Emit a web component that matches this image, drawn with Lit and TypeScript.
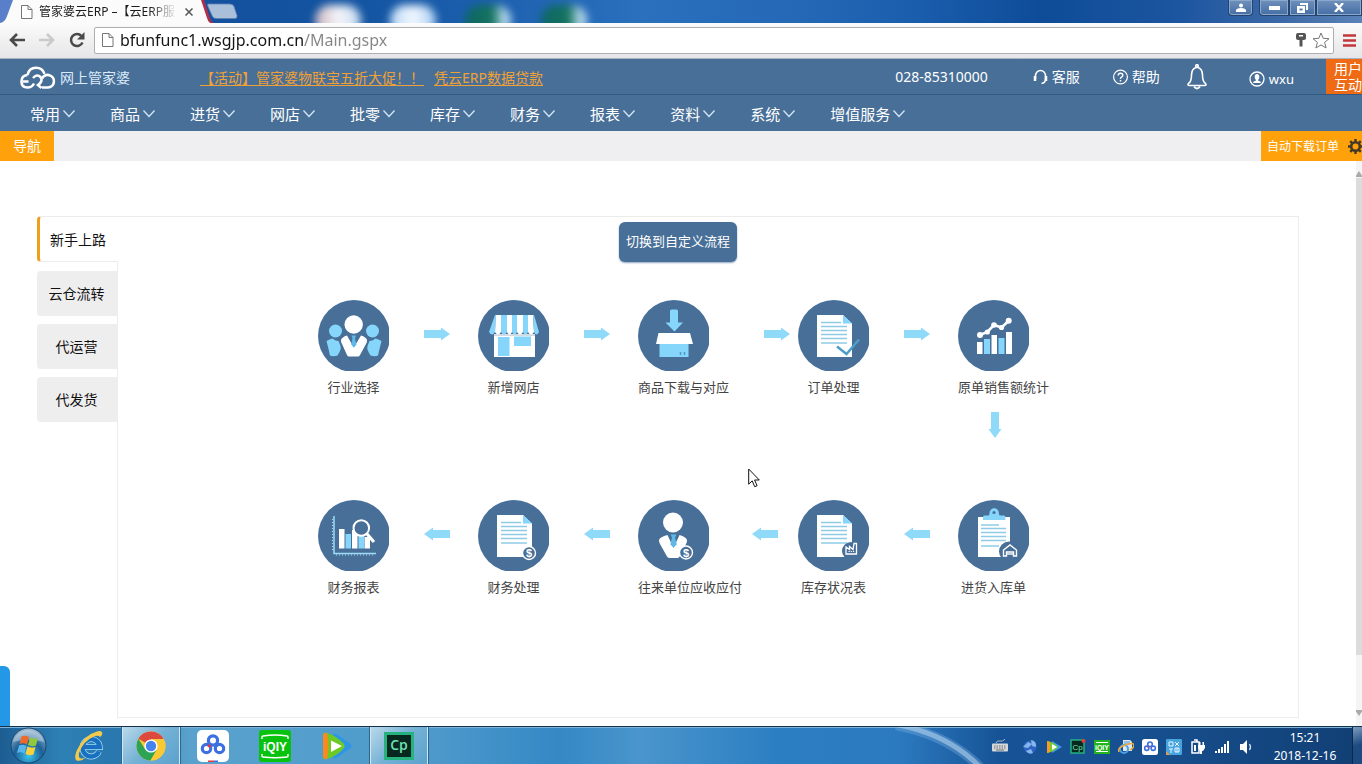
import { LitElement, html, css, svg, SVGTemplateResult } from "lit";
import { customElement, state } from "lit/decorators.js";
import { classMap } from "lit/directives/class-map.js";

const BLUE = "#486f98";
const SKY = "#86d6fb";

/* ---------- shared icon fragments ---------- */

const sheetLines = svg`
  <path d="M23 22.5h20M23 26.5h26M23 30.5h26M23 34.5h26M23 38.5h26M23 43h26" stroke="#8fcbe6" stroke-width="1.3" fill="none"/>`;

const sheet = svg`
  <path d="M19 15h26l9 8.5V57H19z" fill="#fff"/>
  <path d="M45 15v8.5h9z" fill=${SKY}/>
  ${sheetLines}`;

const coin = (x: number, y: number) => svg`
  <circle cx=${x} cy=${y} r="6.5" fill=${BLUE} stroke="#fff" stroke-width="1.4"/>
  <text x=${x} y=${y + 4} font-size="11" font-weight="700" text-anchor="middle" fill="#fff" font-family="Liberation Sans, sans-serif">$</text>`;

/* awning stripes: top edge and scalloped bottom edge positions */
const awningTop = [17, 18, 23, 29, 34, 39, 45, 50, 55, 56];
const awningBottom = [11, 17, 23, 29, 34, 39, 45, 50, 56, 61];
const awning = awningBottom.slice(0, -1).map((b, i) => {
  const end = awningBottom[i + 1];
  return svg`<path d=${`M${awningTop[i]} 15H${awningTop[i + 1]}L${end} 32Q${(b + end) / 2} 37 ${b} 32z`} fill=${i % 2 ? "#fff" : SKY}/>`;
});

const icons: Record<string, SVGTemplateResult> = {
  people: svg`
    <g fill=${SKY}>
      <circle cx="17.5" cy="31" r="6.5"/><circle cx="54.5" cy="31" r="6.5"/>
      <path d="M8.500 41q3-2 6-2.500l3 2 3 .500 2 5q1 3-1 6l-2 3.500q-5 1.500-7.500 0L10.500 49z"/>
      <path d="M63.500 41q-3-2-6-2.500l-3 2-3 .500-2 5q-1 3 1 6l2 3.500q5 1.500 7.500 0L61.500 49z"/>
    </g>
    <circle cx="35.700" cy="24.500" r="9.200" fill="#fff"/>
    <path d="M23 40q1-3 6-4.500l6.800 12L43 35.500q5 1.500 6 4.500.3 2-1 4l-6 11q-.7 1.500-2 1.500h-9q-1.300 0-2-1.500l-5-11q-1.300-2-1-4z" fill="#fff"/>
    <path d="M33.500 35.500h4.500l-1 3 1.500 6-2.700 3-2.600-3 1.300-6z" fill="#5fb9e8"/>`,
  store: svg`
    <path d="M16 34h41v23H16z" fill="#fff"/>
    <path d="M16 35h41" stroke="#a9b9c6" stroke-width="1"/>
    ${awning}
    <path d="M20 37h11.500v19H20zM36 36.500h17V46H36z" fill=${SKY}/>`,
  box: svg`
    <path d="M32 11q0-1.500 1.500-1.500h5Q40 9.500 40 11v11.500h5L36.500 31.500 27.500 22.500H32z" fill=${SKY}/>
    <path d="M20.500 33h31.500l3 11H18z" fill="#fff"/>
    <path d="M21.500 44h29v13h-29z" fill=${SKY}/>
    <path d="M42.500 52v3M46.500 52v3" stroke="#4d9bc9" stroke-width="1.500"/>`,
  order: svg`${sheet}
    <path d="M39 46.500l9.500 7.500L61 39.500" fill="none" stroke="#4b9fc9" stroke-width="2.500"/>`,
  trend: svg`
    <path d="M19 42h5.500v12H19zM33.500 35H39v19h-5.500zM48 32h6v22h-6z" fill="#fff"/>
    <path d="M26 39h6v15h-6zM40.500 38h6v16h-6z" fill=${SKY}/>
    <path d="M22 35l7.300-3L36 25l7.500 2.500 7-6.500" fill="none" stroke="#fff" stroke-width="2.600"/>
    <g fill="#fff"><circle cx="22" cy="35" r="3"/><circle cx="29.300" cy="32" r="2.600"/><circle cx="36" cy="25" r="2.800"/><circle cx="43.500" cy="27.500" r="2.600"/><circle cx="50.700" cy="20.800" r="3"/></g>`,
  report: svg`
    <path d="M16 16v37.500h42" fill="none" stroke="#9fdcf8" stroke-width="1.500"/>
    <path d="M14.500 19v33M18 55h39" fill="none" stroke="#9fdcf8" stroke-width="1" stroke-dasharray="1 2"/>
    <path d="M21 29h5.500v19.500H21zM34 30h5.500v18.500H34zM46.500 37H52v11.500h-5.500z" fill="#fff"/>
    <path d="M27.500 34H33v14.500h-5.500zM40.500 35h5.500v13.500h-5.500z" fill=${SKY}/>
    <circle cx="43.300" cy="28" r="7.800" fill=${BLUE} stroke="#fff" stroke-width="2"/>
    <path d="M49 34l7 8" stroke="#fff" stroke-width="3.200"/>`,
  finance: svg`${sheet}${coin(51, 53)}`,
  person: svg`
    <circle cx="35" cy="22.500" r="10" fill="#fff"/>
    <path d="M21 40q1-3 8.500-5l6 13 6-13q6.500 2 7.500 5 .3 2-1 4l-6 12q-1 2-2.500 2H32q-2 0-3-1.500L22 44q-1-2-1-4z" fill="#fff"/>
    <path d="M32.500 34.500h6l-1.500 3 1.800 7-3.300 3-3.200-3 1.700-7z" fill="#5fb9e8"/>
    ${coin(48, 52.5)}`,
  stock: svg`${sheet}
    <circle cx="53" cy="51" r="9" fill=${BLUE}/>
    <path d="M48 54V47l3.500 2.500V46.500L55 49.500l1-6h2.500V54z" fill="none" stroke="#fff" stroke-width="1.300"/>
    <path d="M50.500 51.500h6" stroke="#fff" stroke-width="1.200" stroke-dasharray="1.200 1"/>`,
  inbound: svg`
    <path d="M20 17h32v40H20z" fill="#fff"/>
    <path d="M25 20v-3q0-1.500 1.500-1.500h4q1 0 1-2.500a4.700 4.700 0 0 1 9.400 0q0 2.500 1 2.500h4q1.500 0 1.500 1.500v3z" fill=${SKY}/>
    <circle cx="36" cy="12.500" r="1.600" fill=${BLUE}/>
    <path d="M23 25h18M23 28.500h25M23 32.500h25M23 36.500h25M23 40.500h25M23 46h18" stroke="#8fcbe6" stroke-width="1.300" fill="none"/>
    <circle cx="51" cy="51.500" r="10" fill=${BLUE}/>
    <path d="M45.500 56v-6l6.500-5 6.500 5v6h-3v-4h-7v4z" fill="none" stroke="#fff" stroke-width="1.400"/>
    <path d="M49 54h6" stroke="#fff" stroke-width="1.400"/>`,
};

interface Step { icon: string; label: string; arrow?: "right" | "left"; offset?: string; }

const firstRow: Step[] = [
  { icon: "people", label: "行业选择", arrow: "right" },
  { icon: "store", label: "新增网店", arrow: "right" },
  { icon: "box", label: "商品下载与对应", arrow: "right", offset: "far" },
  { icon: "order", label: "订单处理", arrow: "right" },
  { icon: "trend", label: "原单销售额统计" },
];

const secondRow: Step[] = [
  { icon: "report", label: "财务报表", arrow: "left" },
  { icon: "finance", label: "财务处理", arrow: "left" },
  { icon: "person", label: "往来单位应收应付", arrow: "left", offset: "mid" },
  { icon: "stock", label: "库存状况表", arrow: "left" },
  { icon: "inbound", label: "进货入库单" },
];

const font = css`"Noto Sans", "Noto Sans CJK SC", sans-serif`;

const base = css`
  * { box-sizing: border-box; }
  :host { display: block; font-family: ${font}; }
  button { font: inherit; color: inherit; background: none; border: 0; padding: 0; margin: 0; cursor: pointer; }
  a { color: inherit; text-decoration: none; }
  svg { display: block; flex: none; }
`;

/* ---------- browser window chrome ---------- */

@customElement("browser-chrome")
class BrowserChrome extends LitElement {
  static styles = [base, css`
    .strip {
      display: flex; justify-content: space-between; height: 23px; position: relative; overflow: hidden;
      background: linear-gradient(90deg, #3466b4 0, #14519f 220px, #12539f 340px, #1c5fae 480px, #2a70bd 640px, #2468b6 800px, #1a5dac 920px, #0e4c98 1040px, #1c55a0 1180px, #3f6ba8 1290px, #5a83b8 100%);
    }
    .glow { position: absolute; top: 5px; width: 46px; height: 30px; border-radius: 16px; filter: blur(4px); }
    .g1 { left: 315px; background: linear-gradient(90deg, #c9b3bd, #f6f6fa 50%, #c4d8f0); }
    .g2 { left: 390px; background: linear-gradient(90deg, #b8d6f6, #f2f8ff 50%, #a9cdf2); }
    .g3 { left: 465px; background: linear-gradient(90deg, #0d6664 0, #15735f 60%, #b9daf0 85%); }
    .g4 { left: 541px; background: linear-gradient(90deg, #0d6664 0, #15735f 60%, #b9daf0 85%); }
    .tabs { display: flex; position: relative; }
    .tabshape { position: absolute; left: 0; top: 0; }
    .tab { position: relative; display: flex; align-items: center; height: 23px; width: 200px; padding-left: 21px; gap: 6px; }
    .title {
      width: 138px; white-space: nowrap; overflow: hidden; font-size: 12px; line-height: 20px; color: #1c1c1c;
      -webkit-mask-image: linear-gradient(90deg, #000 80%, transparent);
    }
    .close { width: 12px; height: 20px; display: grid; place-items: center; }
    .win { display: flex; position: relative; height: 16px; color: #fff; }
    .wbtn { display: grid; place-items: center; height: 16px; border: 1px solid #24446f; border-top: 0; background: linear-gradient(#6f90ba, #456ea6); box-shadow: inset 0 0 0 1px #8aa7cc; }
    .user { width: 25px; margin-right: 6px; border-radius: 0 0 4px 4px; }
    .min { width: 30px; border-radius: 0 0 0 4px; }
    .max { width: 27px; }
    .x { width: 46px; }
    .bar {
      display: flex; align-items: center; height: 36px; padding: 0 5px 1px 9px; gap: 14px;
      background: linear-gradient(#fbfbfb, #e6e6e8); border-bottom: 1px solid #a9b4c2;
    }
    .tool { width: 16px; height: 20px; display: grid; place-items: center; }
    .address {
      flex: 1; min-width: 0; display: flex; align-items: center; height: 27px; margin: 0 -7px 0 -5px; padding: 0 3px 0 7px; gap: 6px;
      background: #fff; border: 1px solid #adadb2; border-radius: 2px;
    }
    .url {
      flex: 1; min-width: 0; border: 0; outline: 0; padding: 0; height: 24px; font-family: ${font}; font-size: 16px; color: #222;
      background: linear-gradient(90deg, #141414 184px, #858585 184px); -webkit-background-clip: text; background-clip: text;
      -webkit-text-fill-color: transparent;
    }
    .lead { display: flex; align-items: center; gap: 14px; }
  `];

  render() {
    const page = svg`<path d="M.5.5h6.500l4 4v9H.5z M7 .5v4h4" fill="#fff" stroke="#777"/>`;
    return html`
      <div class="strip">
        <i class="glow g1"></i><i class="glow g2"></i><i class="glow g3"></i><i class="glow g4"></i>
        <div class="tabs">
          <svg class="tabshape" width="240" height="23" viewBox="0 0 240 23">
            <path d="M0 23q5-1 7-7L13 0H0z" fill="#5a7fca"/>
            <path d="M208 4h22q3 0 4 2.500l3 9q.5 3-2 3h-19q-3 0-4-3l-4-9q-1-2.500 0-2.500z" fill="#aabfd9" stroke="#5f82b4" stroke-width=".8"/>
            <path d="M200 0h4l6 18q1 4 4 5h-10z" fill="#b0304a"/>
            <path d="M0 23q5-1 7-7l6-16h188l6 18q1 4 3 5z" fill="#fbfbfb"/>
          </svg>
          <div class="tab">
            <svg width="12" height="14" viewBox="0 0 12 14">${page}</svg>
            <span class="title">管家婆云ERP –【云ERP服</span>
            <button class="close" aria-label="关闭标签页">
              <svg width="8" height="8" viewBox="0 0 8 8"><path d="M.5.5l7 7M7.500.5l-7 7" stroke="#555" stroke-width="1.500"/></svg>
            </button>
          </div>
        </div>
        <div class="win">
          <button class="wbtn user" aria-label="用户">
            <svg width="10" height="9" viewBox="0 0 10 9"><circle cx="5" cy="2.500" r="2" fill="#fff"/><path d="M0 9V7q1-2 5-2t5 2v2z" fill="#fff"/></svg>
          </button>
          <button class="wbtn min" aria-label="最小化"><svg width="11" height="4"><path d="M0 0h11v4H0z" fill="#fff"/></svg></button>
          <button class="wbtn max" aria-label="还原">
            <svg width="11" height="10" viewBox="0 0 11 10"><path d="M3 0h8v7H9V2H3zM0 3h8v7H0zM2.500 5.500v2h3v-2z" fill="#fff" fill-rule="evenodd"/></svg>
          </button>
          <button class="wbtn x" aria-label="关闭"><svg width="10" height="9" viewBox="0 0 10 9"><path d="M1 0l8 9M9 0L1 9" stroke="#fff" stroke-width="2.400"/></svg></button>
        </div>
      </div>
      <div class="bar">
        <div class="lead">
          <button class="tool" aria-label="后退"><svg width="16" height="14" viewBox="0 0 16 14"><path d="M8 1L2 7l6 6M2.500 7H16" fill="none" stroke="#4a4a4a" stroke-width="2.600"/></svg></button>
          <button class="tool" aria-label="前进"><svg width="16" height="14" viewBox="0 0 16 14"><path d="M8 1l6 6-6 6M0 7h13.500" fill="none" stroke="#cacaca" stroke-width="2.600"/></svg></button>
          <button class="tool" aria-label="重新加载"><svg width="16" height="16" viewBox="0 0 16 16"><path d="M13.500 10.500A6 6 0 1 1 12.500 4" fill="none" stroke="#4a4a4a" stroke-width="2.500"/><path d="M15.500 0v7.500H8z" fill="#4a4a4a"/></svg></button>
        </div>
        <div class="address">
          <svg width="12" height="14" viewBox="0 0 12 14">${page}</svg>
          <input class="url" aria-label="网址" .value=${"bfunfunc1.wsgjp.com.cn/Main.gspx"} spellcheck="false" />
          <svg width="10" height="14" viewBox="0 0 10 14"><path d="M2 0h6q2 0 2 2v3q0 2-2 2H6.500v6.500h-3V7H2Q0 7 0 5V2q0-2 2-2zM3 2v1.500h4V2z" fill="#555" fill-rule="evenodd"/></svg>
          <svg width="18" height="17" viewBox="0 0 18 17"><path d="M9 1l2.200 5.300 5.800.4-4.400 3.700 1.500 5.600L9 12.900 3.900 16l1.500-5.600L1 6.700l5.800-.4z" fill="#fff" stroke="#777"/></svg>
        </div>
        <button class="tool" aria-label="菜单"><svg width="13" height="13" viewBox="0 0 13 13"><path d="M0 1.500h13M0 6.500h13M0 11.500h13" stroke="#c2373b" stroke-width="2.600"/></svg></button>
      </div>`;
  }
}

/* ---------- ERP header, menu and page tabs ---------- */

@customElement("erp-header")
class ErpHeader extends LitElement {
  static styles = [base, css`
    .top { display: flex; align-items: center; height: 36px; padding-left: 20px; background: #486f98; border-bottom: 1px solid #335980; color: #fff; font-size: 14px; line-height: 20px; overflow: hidden; }
    .brand { display: flex; align-items: center; gap: 4px; width: 180px; padding-top: 2px; color: #dcebfa; }
    .promo { display: flex; gap: 10px; padding-top: 2px; color: #f0a136; white-space: nowrap; }
    .promo a { text-decoration: underline; text-underline-offset: 2px; }
    .side { display: flex; align-items: center; margin-left: auto; height: 100%; white-space: nowrap; }
    .link { display: flex; align-items: center; gap: 4px; }
    .service { margin: 0 33px 0 45px; }
    .bell { margin: 0 41px 0 26px; }
    .account { margin-right: 32px; padding-top: 4px; font-size: 13px; }
    .talk { width: 36px; height: 36px; padding-left: 8px; overflow: hidden; background: #ee6a14; font-size: 14px; line-height: 16px; text-align: left; white-space: normal; word-break: break-all; }
    .menu { display: flex; align-items: center; gap: 34px; height: 36px; padding: 2px 0 0 30px; background: #486f98; color: #fff; font-size: 15px; line-height: 22px; }
    .menu button { display: flex; align-items: center; gap: 2px; white-space: nowrap; }
    .pages { display: flex; justify-content: space-between; height: 30px; background: #efeef0; color: #fff; }
    .nav { width: 54px; background: #ffa10a; font-size: 14px; line-height: 20px; }
    .auto { display: flex; align-items: center; gap: 9px; width: 101px; padding-left: 6px; overflow: hidden; background: #ffa10a; font-size: 12px; white-space: nowrap; }
  `];

  private menus = ["常用", "商品", "进货", "网店", "批零", "库存", "财务", "报表", "资料", "系统", "增值服务"];

  render() {
    return html`
      <header class="top">
        <a class="brand" href="#">
          <svg width="36" height="24" viewBox="0 0 36 24" fill="none" stroke="#fff" stroke-width="2.600">
            <path d="M7.500 9Q1.500 9.500 1.500 15.500 1.500 21.500 7.500 21.500 12 21.500 14 17.500M3 15.500h5.500"/>
            <path d="M7.500 9Q9 1.800 16 1.800q6.500 0 8.500 6"/>
            <path d="M13 12q4-4.500 7.500-1 3 4-2.500 8l3.500 3"/>
            <path d="M22 12.500a6.300 6.300 0 1 1 6 9h-6"/>
          </svg>
          <span>网上管家婆</span>
        </a>
        <div class="promo">
          <a href="#">【活动】管家婆物联宝五折大促！！</a>
          <a href="#">凭云ERP数据贷款</a>
        </div>
        <div class="side">
          <span>028-85310000</span>
          <a class="link service" href="#">
            <svg width="15" height="16" viewBox="0 0 15 16" fill="none" stroke="#fff"><path d="M2.500 10V7a5 5.500 0 0 1 10 0v3q0 4-4 4.500" stroke-width="1.500"/><path d="M2 7v5M13 7v5" stroke-width="2.500"/></svg>
            <span>客服</span>
          </a>
          <a class="link" href="#">
            <svg width="15" height="16" viewBox="0 0 15 16" fill="none" stroke="#fff" stroke-width="1.200"><circle cx="7.500" cy="8" r="6.900"/><path d="M5.200 6.500Q5.200 4.300 7.500 4.300T9.800 6.300Q9.800 7.500 8.500 8.200T7.500 10" stroke-width="1.400"/><path d="M7.500 11v1.500" stroke-width="1.500"/></svg>
            <span>帮助</span>
          </a>
          <button class="bell" aria-label="消息">
            <svg width="22" height="26" viewBox="0 0 22 26" fill="none" stroke="#fff" stroke-width="1.600"><path d="M11 3.200q5.500 1 5.500 8 0 6 3 8.300 1.500 2-1 2h-15q-2.500 0-1-2 3-2.300 3-8.300 0-7 5.500-8z"/><circle cx="11" cy="2" r="1.300"/><path d="M8 22.500q3 4 6 0" stroke-width="2"/></svg>
          </button>
          <a class="link account" href="#">
            <svg width="16" height="16" viewBox="0 0 16 16"><circle cx="8" cy="8" r="7" fill="none" stroke="#fff" stroke-width="1.300"/><ellipse cx="8" cy="6" rx="2.300" ry="2.900" fill="#fff"/><path d="M4 12q0-1.800 3-2.500V8h2v1.500q3 .7 3 2.500z" fill="#fff"/></svg>
            <span>wxu</span>
          </a>
          <button class="talk">用户互动</button>
        </div>
      </header>
      <nav class="menu">
        ${this.menus.map((m) => html`
          <button><span>${m}</span><svg width="14" height="10" viewBox="0 0 14 10"><path d="M1.500 1.500L7 7.500l5.500-6" fill="none" stroke="#d3e6f5" stroke-width="1.300"/></svg></button>`)}
      </nav>
      <div class="pages">
        <button class="nav">导航</button>
        <button class="auto">
          <span>自动下载订单</span>
          <svg width="15" height="15" viewBox="0 0 15 15"><circle cx="7.500" cy="7.500" r="4.300" fill="none" stroke="#453a28" stroke-width="2.600"/><path d="M7.500 0v3M7.500 12v3M0 7.500h3M12 7.500h3M2.200 2.200l2 2M10.800 10.800l2 2M2.200 12.800l2-2M10.800 4.200l2-2" stroke="#453a28" stroke-width="2.400"/></svg>
        </button>
      </div>`;
  }
}

/* ---------- flow guide ---------- */

@customElement("flow-guide")
class FlowGuide extends LitElement {
  static styles = [base, css`
    :host { flex: 1; min-height: 0; display: flex; position: relative; background: #fff; overflow: hidden; }
    .page { flex: 1; display: flex; padding: 55px 57px 8px 37px; }
    .tabs { display: flex; flex-direction: column; gap: 8px; width: 81px; margin-right: -1px; z-index: 1; }
    .tab { height: 45px; padding-right: 2px; border-radius: 4px 0 0 4px; background: #eee; color: #111; font-size: 14px; line-height: 20px; text-align: center; }
    .tab.on { height: 46px; margin-bottom: 1px; padding-top: 2px; background: #fff; border: solid #ececec; border-width: 1px 0 1px 3px; border-left-color: #eda01d; }
    .panel { flex: 1; min-width: 0; display: flex; flex-direction: column; align-items: center; padding: 5px 60px 0 0; border: 1px solid #ececec; }
    .switch { height: 40px; padding: 0 7px 2px; border-radius: 6px; background: #486f98; color: #fff; font-size: 13px; line-height: 20px; box-shadow: 0 1px 2px #8fa6c0; }
    .flow { display: grid; grid-template-columns: repeat(4, 160px) 80px; padding-top: 38px; }
    .cell { display: flex; align-items: flex-start; }
    .node { width: 71px; color: #444; font-size: 13px; line-height: 20px; text-align: center; white-space: nowrap; }
    .node svg { margin-bottom: 6px; }
    .node span { display: block; }
    .arrow { margin: 27px 0 0 35px; }
    .arrow.far { margin-left: 55px; }
    .arrow.mid { margin-left: 43px; }
    .down { grid-column: 5; height: 103px; padding: 15px 0 0 30px; }
    .scroll { display: flex; flex-direction: column; align-items: center; width: 6px; padding: 9px 0; background: #f4f4f4; overflow: hidden; }
    .thumb { flex: 1; width: 6px; margin-bottom: 54px; background: #dcdcdc; }
    .handle { position: absolute; left: 0; bottom: 0; width: 10px; height: 60px; border-radius: 0 6px 0 0; background: #2398e6; }
  `];

  @state() private active = 0;
  private groups = ["新手上路", "云仓流转", "代运营", "代发货"];

  private cell(s: Step) {
    return html`
      <div class="cell">
        <a class="node" href="#">
          <svg width="71" height="71" viewBox="0 0 71 71"><circle cx="36" cy="36" r="36" fill=${BLUE}/>${icons[s.icon]}</svg>
          <span>${s.label}</span>
        </a>
        ${s.arrow ? html`
          <svg class=${classMap({ arrow: true, far: s.offset === "far", mid: s.offset === "mid" })} width="26" height="14" viewBox="0 0 26 14">
            <path d=${s.arrow === "right" ? "M0 3h17V.5L26 7l-9 6.500V11H0z" : "M26 3H9V.5L0 7l9 6.500V11h17z"} fill="#8fdaf8"/>
          </svg>` : ""}
      </div>`;
  }

  render() {
    return html`
      <main class="page">
        <div class="tabs" role="tablist">
          ${this.groups.map((g, i) => html`
            <button role="tab" aria-selected=${i === this.active} class=${classMap({ tab: true, on: i === this.active })} @click=${() => (this.active = i)}>${g}</button>`)}
        </div>
        <section class="panel">
          <button class="switch">切换到自定义流程</button>
          <div class="flow">
            ${firstRow.map((s) => this.cell(s))}
            <div class="down"><svg width="14" height="26" viewBox="0 0 14 26"><path d="M3 0v17H.5L7 26l6.500-9H11V0z" fill="#8fdaf8"/></svg></div>
            ${secondRow.map((s) => this.cell(s))}
          </div>
        </section>
      </main>
      <div class="scroll">
        <svg width="10" height="8" viewBox="0 0 10 8"><path d="M5 1l4 6H1z" fill="#aaa"/></svg>
        <i class="thumb"></i>
        <svg width="10" height="8" viewBox="0 0 10 8"><path d="M5 7l4-6H1z" fill="#aaa"/></svg>
      </div>
      <i class="handle"></i>`;
  }
}

/* ---------- desktop taskbar ---------- */

const cloudRings = svg`
  <g fill="none" stroke-width="3.200"><circle cx="16" cy="10.500" r="4.600" stroke="#3c6fe0"/><circle cx="9.500" cy="18.500" r="4.200" stroke="#3c6fe0"/><circle cx="22.500" cy="18.500" r="4.200" stroke="#3c6fe0"/><path d="M13 15l-1.500 2" stroke="#e0383e"/></g>`;

@customElement("task-bar")
class TaskBar extends LitElement {
  static styles = [base, css`
    .bar {
      display: flex; align-items: stretch; height: 38px; position: relative; overflow: hidden; border-top: 1px solid #14304a; box-shadow: inset 0 1px 0 #7db4da;
      background: linear-gradient(90deg, #1d5d92 0, #2d80b4 60px, #2877ae 118px, #5aa2cd 190px, #4f9ccb 370px, #4c98cb 440px, #3488c5 560px, #4a95cc 640px, #2b7ec2 780px, #2c79bf 900px, #165396 1000px, #174f8e 1150px, #113f74 100%);
    }
    .sweep { position: absolute; left: 0; top: 0; }
    .apps { display: flex; gap: 4px; position: relative; }
    .app { width: 58px; display: grid; place-items: center; }
    .start { width: 56px; }
    .app.on { border: 1px solid #d2e7f4; border-width: 0 1px 0 1px; box-shadow: 0 0 0 1px #2e6690; background: linear-gradient(135deg, #b9d9ea, #74b1d5 50%, #5aa2cd); }
    .tray { position: relative; margin-left: auto; display: flex; align-items: center; gap: 8px; padding-top: 3px; }
    .tray svg:first-child { margin-right: 6px; }
    .clock { position: relative; width: 98px; padding: 2px 8px 0 12px; color: #fff; font-size: 12px; line-height: 18px; text-align: center; }
    .clock span { display: block; }
    .desk { position: relative; width: 10px; border-left: 1px solid #0b294d; background: linear-gradient(160deg, #7e9dc0, #1d4a80 50%); }
  `];

  render() {
    return html`
      <footer class="bar">
        <svg class="sweep" width="1100" height="38" viewBox="0 0 1100 38">
          <path d="M896 -2q52 10 84 42" fill="none" stroke="#8fc0ea" stroke-width="10" opacity=".3"/>
          <path d="M899 -2q50 10 81 42" fill="none" stroke="#c5dff5" stroke-width="5" opacity=".5"/>
        </svg>
        <div class="apps">
          <button class="app start" aria-label="开始">
            <svg width="37" height="37" viewBox="0 0 37 37">
              <defs><radialGradient id="orb" cx=".5" cy=".8" r=".8"><stop offset="0" stop-color="#39c3ee"/><stop offset=".5" stop-color="#1c5f96"/><stop offset="1" stop-color="#9fbdd4"/></radialGradient></defs>
              <circle cx="18.500" cy="18.500" r="17.500" fill="url(#orb)" stroke="#17466e"/>
              <path d="M3 15a16 16 0 0 1 31 0q-15-5-31 0z" fill="#fff" opacity=".35"/>
              <path d="M11.500 9.500q3-1.500 7.500.5l-2 7.500q-4-2-7.500-.5z" fill="#ee6a2c"/><path d="M20 10.500q4 2 8 .5l-2 7.500q-4 1.500-8-.5z" fill="#92c83e"/>
              <path d="M9 18.500q3.500-1.500 7.500.5l-2 7.500q-4-2-7.500-.5z" fill="#58b4ea"/><path d="M17.500 19.500q4 2 8 .5l-2 7.500q-4 1.500-8-.5z" fill="#fcd03a"/>
            </svg>
          </button>
          <button class="app" aria-label="Internet Explorer">
            <svg width="32" height="32" viewBox="0 0 32 32" fill="none">
              <path d="M26 21.500a8.700 8.700 0 1 1 .8-4.500H11" stroke="#a6e0f8" stroke-width="5.800"/>
              <path d="M26 21.500a8.700 8.700 0 1 1 .8-4.500H11" stroke="#1a70c0" stroke-width="4.400"/>
              <path d="M29 2q1 3-2 5-1-2-5-1Q10 11 6 23q-1 5 2 5.500 3 0 5-1.500-5 5-9.500 3.500-3-3 .5-10.500Q11 5 24 1.500q3-1 5 .5z" fill="#f3c94b"/>
            </svg>
          </button>
          <button class="app on" aria-label="Chrome">
            <svg width="30" height="30" viewBox="0 0 30 30">
              <circle cx="15" cy="15" r="14.500" fill="#fbc934"/>
              <path d="M15 15L2.400 7.800A14.500 14.500 0 0 1 27.600 8H15z" fill="#dd4a3d"/>
              <path d="M2.400 7.800A14.500 14.500 0 0 0 14.500 29.500L21 18.500 15 21 9 18z" fill="#2da454"/>
              <path d="M15 15l6 3.500-6.500 11A14.500 14.500 0 0 0 27.600 8H15z" fill="#fbc934"/>
              <circle cx="15" cy="15" r="6.600" fill="#fff"/><circle cx="15" cy="15" r="5.200" fill="#4584f0"/>
            </svg>
          </button>
          <button class="app" aria-label="百度网盘">
            <svg width="32" height="32" viewBox="0 0 32 32"><rect width="32" height="32" rx="5" fill="#fff"/>${cloudRings}<path d="M11 30.500h6V32h-6z" fill="#e0383e"/><path d="M17 30.500h4V32h-4z" fill="#3c6fe0"/></svg>
          </button>
          <button class="app" aria-label="爱奇艺">
            <svg width="32" height="32" viewBox="0 0 32 32"><rect width="32" height="32" rx="3" fill="#09c20d"/><path d="M3 9V7q0-1 1-1 12-2 24 0 1 0 1 1v2M3 24v2q0 1 1 1 12 1.500 24 0 1 0 1-1v-2" fill="none" stroke="#fff" stroke-width="1.500"/><text x="16" y="21" text-anchor="middle" font-family="Liberation Sans, sans-serif" font-weight="700" font-size="12" fill="#fff">iQIY</text></svg>
          </button>
          <button class="app" aria-label="腾讯视频">
            <svg width="30" height="28" viewBox="0 0 30 28"><path d="M11 2q2-1 5 1l12 8.500q3 2.500 0 5L16 25q-3 2-5 1z" fill="#2e96e8"/><path d="M1 4q0-4 4-3 10 3 17 11 1.500 2 0 4-7 8-17 11-4 1-4-3z" fill="#6cc926"/><path d="M1 4q0-4 4-3 3 13 0 26-4 1-4-3z" fill="#fb8a1e"/><path d="M9 8.500L20 14 9 20z" fill="#fff"/></svg>
          </button>
          <button class="app on" aria-label="Captivate">
            <svg width="30" height="28" viewBox="0 0 30 28"><path d="M0 0h30v28H0z" fill="#25b27d"/><path d="M3 3h24v22H3z" fill="#06281f"/><text x="15" y="18" text-anchor="middle" font-family="Open Sans, sans-serif" font-weight="600" font-size="14" fill="#6fe3b3">Cp</text></svg>
          </button>
        </div>
        <div class="tray">
          <svg width="16" height="16" viewBox="0 0 16 16"><path d="M4 4q1-3 4-2 3 1 5-2" fill="none" stroke="#aeb6c0"/><rect y="4.500" width="16" height="8" rx="1" fill="#d7d8da"/><path d="M2 7h12M2 9h12" stroke="#6a7078" stroke-dasharray="1.500 1"/><path d="M4 11h8" stroke="#6a7078"/></svg>
          <svg width="16" height="16" viewBox="0 0 16 16"><circle cx="8" cy="8" r="6.500" fill="#2c66c0"/><path d="M1 8l5-5 4 2-4 4zM9 1q6 1 5 7l-4-1zM4 12l5-2 2 4q-4 2-7-2z" fill="#86b5ee"/></svg>
          <svg width="16" height="16" viewBox="0 0 16 16"><path d="M6 2l10 6-10 6z" fill="#3e9be6"/><path d="M1 2q7 1 11 6-4 5-11 6z" fill="#74cc2e"/><path d="M1 2l3 1v10l-3 1z" fill="#f99a25"/><path d="M6 5l5 3-5 3z" fill="#fff"/></svg>
          <svg width="16" height="16" viewBox="0 0 16 16"><path d="M1 1h13v13H1z" fill="#06281f" stroke="#25b27d" stroke-width="1.500"/><text x="7.500" y="11" text-anchor="middle" font-family="Liberation Sans, sans-serif" font-size="8" fill="#6fe3b3">Cp</text><circle cx="13.500" cy="2" r="2" fill="#e53a38"/></svg>
          <svg width="16" height="16" viewBox="0 0 16 16"><rect y="1" width="16" height="14" fill="#23b51f"/><path d="M2 3.500h12M2 12.500h12" stroke="#fff"/><text x="8" y="11" text-anchor="middle" font-family="Liberation Sans, sans-serif" font-weight="700" font-size="7" fill="#fff">iQIY</text></svg>
          <svg width="16" height="16" viewBox="0 0 16 16"><path d="M5 1h7l2 2v9H5z" fill="#dce9f5"/><path d="M6 3h6M6 5h6" stroke="#4f8fd0"/><circle cx="6" cy="10" r="4" fill="none" stroke="#4aa1e2" stroke-width="2"/><path d="M1 13Q-1 9 7 6t9 0q0 3-4 5" fill="none" stroke="#f0a83a" stroke-width="1.600"/></svg>
          <svg width="16" height="16" viewBox="0 0 32 32"><rect width="32" height="32" rx="5" fill="#fff"/>${cloudRings}</svg>
          <svg width="16" height="16" viewBox="0 0 16 16"><rect width="16" height="16" rx="1" fill="#46a5df"/><path d="M3 3h4v4H3zM9 3l4 4M13 3L9 7M9 9h4v4H9zM11 9v4M3 10h4M5 10v4" fill="none" stroke="#e8f6ff"/><path d="M0 16v-4l4 4z" fill="#e69b52"/></svg>
          <svg width="16" height="16" viewBox="0 0 16 16"><path d="M2 3h7v11H2zM4 1h3v2" fill="none" stroke="#fff" stroke-width="1.500"/><path d="M4 6h2v6H4z" fill="#fff"/><path d="M8 6h7v3l-2 3h-1v3h-2v-3L8 9zM9 3h1.500v3H9zM12.500 3H14v3h-1.500z" fill="#fff"/></svg>
          <svg width="16" height="16" viewBox="0 0 16 16"><path d="M1 12h2v2H1zM4 10h2v4H4zM7 8h2v6H7zM10 5h2v9h-2zM13 2h2v12h-2z" fill="#fff"/></svg>
          <svg width="16" height="16" viewBox="0 0 16 16"><path d="M2 5h3l4-4v14l-4-4H2z" fill="#fff"/><path d="M11.500 5q2 3 0 6" fill="none" stroke="#dbe8f5" stroke-width="1.300"/></svg>
        </div>
        <div class="clock"><span>15:21</span><span>2018-12-16</span></div>
        <button class="desk" aria-label="显示桌面"></button>
      </footer>`;
  }
}

@customElement("app-root")
class AppRoot extends LitElement {
  static styles = [base, css`
    :host { display: flex; flex-direction: column; height: 100vh; position: relative; overflow: hidden; }
    .pointer { position: absolute; left: 748px; top: 468px; pointer-events: none; }
  `];

  render() {
    return html`
      <browser-chrome></browser-chrome>
      <erp-header></erp-header>
      <flow-guide></flow-guide>
      <task-bar></task-bar>
      <svg class="pointer" width="12" height="20" viewBox="0 0 12 20"><path d="M.7 1v15.200l3.500-3.300 2.500 5.800 2.400-1-2.500-5.700h4.700z" fill="#fff" stroke="#111"/></svg>`;
  }
}
